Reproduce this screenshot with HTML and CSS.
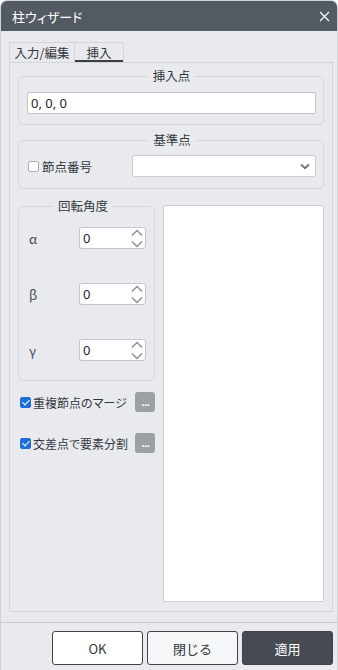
FILE: index.html
```html
<!DOCTYPE html>
<html lang="ja">
<head>
    <meta charset="UTF-8">
    <meta name="viewport" content="width=device-width, initial-scale=1.0">
    <title>柱ウィザード</title>
    <link rel="stylesheet" href="styles.css">
</head>
<body>
    <div class="window">
        <div class="titlebar">
            <span class="title">柱ウィザード</span>
            <svg class="close" width="11" height="11" viewBox="0 0 11 11">
                <path d="M1 1L10 10M10 1L1 10" stroke="#fff" stroke-width="1.2" fill="none"/>
            </svg>
        </div>

        <div class="tabs">
            <div class="tab">入力/編集</div>
            <div class="tab active">挿入</div>
        </div>

        <div class="panel">
            <fieldset class="group point">
                <legend>挿入点</legend>
                <div class="textbox">0, 0, 0</div>
            </fieldset>

            <fieldset class="group base">
                <legend>基準点</legend>
                <div class="base-row">
                    <label class="check"><span class="box"></span>節点番号</label>
                    <div class="select">
                        <svg width="10" height="7" viewBox="0 0 10 7">
                            <path d="M1 1.5L5 5.2L9 1.5" stroke="#71767d" stroke-width="2" fill="none"/>
                        </svg>
                    </div>
                </div>
            </fieldset>

            <div class="lower">
                <div class="left">
                    <fieldset class="group angles">
                        <legend>回転角度</legend>
                        <div class="angle-row">
                            <span class="sym">α</span>
                            <div class="spin">
                                <span>0</span>
                                <svg width="12" height="19" viewBox="0 0 12 19">
                                    <path d="M1 6.5L6 1.5L11 6.5M1 12.5L6 17.5L11 12.5" stroke="#8c9198" stroke-width="1.5" fill="none"/>
                                </svg>
                            </div>
                        </div>
                        <div class="angle-row">
                            <span class="sym">β</span>
                            <div class="spin">
                                <span>0</span>
                                <svg width="12" height="19" viewBox="0 0 12 19">
                                    <path d="M1 6.5L6 1.5L11 6.5M1 12.5L6 17.5L11 12.5" stroke="#8c9198" stroke-width="1.5" fill="none"/>
                                </svg>
                            </div>
                        </div>
                        <div class="angle-row">
                            <span class="sym">γ</span>
                            <div class="spin">
                                <span>0</span>
                                <svg width="12" height="19" viewBox="0 0 12 19">
                                    <path d="M1 6.5L6 1.5L11 6.5M1 12.5L6 17.5L11 12.5" stroke="#8c9198" stroke-width="1.5" fill="none"/>
                                </svg>
                            </div>
                        </div>
                    </fieldset>

                    <div class="option">
                        <label class="check"><span class="box checked"></span>重複節点のマージ</label>
                        <button class="more">...</button>
                    </div>
                    <div class="option">
                        <label class="check"><span class="box checked"></span>交差点で要素分割</label>
                        <button class="more">...</button>
                    </div>
                </div>

                <div class="list"></div>
            </div>
        </div>

        <div class="footer">
            <button class="btn">OK</button>
            <button class="btn close-btn">閉じる</button>
            <button class="btn apply">適用</button>
        </div>
    </div>
</body>
</html>
```

FILE: styles.css
```css
body {
    margin: 0;
    background: #fff;
    font-family: "Noto Sans CJK JP", "Noto Sans", sans-serif;
    font-size: 12px;
    color: #33373d;
    font-feature-settings: "palt";
}
.window {
    width: 338px;
    height: 670px;
    box-sizing: border-box;
    border: 1px solid #cfd2d6;
    border-bottom: none;
    border-radius: 7px 7px 0 0;
    background: #e9eaed;
    display: flex;
    flex-direction: column;
    overflow: hidden;
}
.titlebar {
    height: 30px;
    flex: none;
    background: #545a61;
    color: #fff;
    font-size: 13px;
    display: flex;
    align-items: center;
    justify-content: space-between;
    padding: 0 7px 0 11px;
}
.tabs {
    display: flex;
    height: 20px;
    margin: 11px 0 0 8px;
}
.tab {
    box-sizing: border-box;
    height: 20px;
    line-height: 19px;
    text-align: center;
    border: 1px solid #d3d5d9;
    border-bottom: none;
    font-size: 12.5px;
}
.tab:first-child {
    width: 66px;
}
.tab.active {
    width: 49px;
    border-left: none;
    box-shadow: inset 0 -2px 0 #3a3e45;
}
.panel {
    box-sizing: border-box;
    height: 550px;
    margin: 0 4px 0 8px;
    border: 1px solid #d3d5d9;
    padding: 0 8px 9px 8px;
    display: flex;
    flex-direction: column;
}
.group {
    margin: 0;
    border: 1px solid #d5d7db;
    border-radius: 5px;
    min-width: 0;
}
.group legend {
    margin: 0 auto;
    padding: 0 5px;
    line-height: 18px;
    font-size: 12.5px;
}
.point {
    margin-top: 4px;
    padding: 7px 7px 10px 8px;
}
.textbox {
    height: 22px;
    box-sizing: border-box;
    background: #fff;
    border: 1px solid #c2c6cb;
    border-radius: 2px;
    padding-left: 3px;
    line-height: 20px;
    font-family: "Noto Sans", sans-serif;
    font-feature-settings: normal;
    font-size: 13px;
    color: #1f2226;
}
.base {
    margin-top: 6px;
    padding: 6px 7px 11px 9px;
}
.base-row {
    display: flex;
    align-items: center;
    height: 22px;
}
.check {
    display: flex;
    align-items: center;
    gap: 3px;
    font-size: 12.5px;
}
.box {
    box-sizing: border-box;
    width: 11px;
    height: 11px;
    border: 1px solid #a9adb3;
    border-radius: 2px;
    background: #fff;
    position: relative;
}
.box.checked {
    background: #1d6fd8;
    border-color: #1d6fd8;
}
.box.checked::after {
    content: "";
    position: absolute;
    left: 3px;
    top: 0px;
    width: 3px;
    height: 6px;
    border: solid #fff;
    border-width: 0 1.6px 1.6px 0;
    transform: rotate(45deg);
}
.select {
    margin-left: auto;
    width: 184px;
    height: 22px;
    box-sizing: border-box;
    background: #fff;
    border: 1px solid #c9ccd1;
    border-radius: 3px;
    display: flex;
    align-items: center;
    justify-content: flex-end;
    padding-right: 5px;
}
.lower {
    flex: 1;
    display: flex;
    gap: 8px;
    margin-top: 8px;
}
.left {
    width: 137px;
    flex: none;
}
.angles {
    padding: 12px 8px 19px 10px;
}
.angles legend {
    margin: 0 0 0 24px;
}
.angle-row {
    display: flex;
    align-items: center;
    height: 22px;
}
.angle-row + .angle-row {
    margin-top: 34px;
}
.sym {
    flex: 1;
    font-size: 13px;
    color: #4a4660;
}
.spin {
    width: 67px;
    height: 22px;
    box-sizing: border-box;
    background: #fff;
    border: 1px solid #c2c6cb;
    border-radius: 3px;
    display: flex;
    align-items: center;
    justify-content: space-between;
    padding: 0 2px 0 3px;
    font-family: "Noto Sans", sans-serif;
    font-size: 13px;
    color: #1f2226;
}
.option {
    display: flex;
    align-items: center;
    justify-content: space-between;
    height: 20px;
    padding-left: 2px;
    margin-top: 11px;
}
.option + .option {
    margin-top: 21px;
}
.option .check {
    font-size: 12px;
    gap: 2px;
}
.more {
    width: 20px;
    height: 20px;
    border: none;
    border-radius: 3px;
    background: #9b9fa6;
    color: #fff;
    font-size: 11px;
    font-weight: bold;
    font-family: "Noto Sans", sans-serif;
    letter-spacing: -0.5px;
    padding: 0 0 0 1px;
    line-height: 20px;
}
.list {
    flex: 1;
    margin-top: 8px;
    background: #fff;
    border: 1px solid #c9ccd1;
    border-radius: 2px;
}
.footer {
    flex: none;
    margin-top: 10px;
    border-top: 1px solid #c8cbcf;
    padding: 8px 4px 0 0;
    display: flex;
    justify-content: flex-end;
    gap: 4px;
}
.btn {
    width: 91px;
    height: 34px;
    border: 1px solid #3f444b;
    border-radius: 3px;
    background: #fff;
    color: #33373d;
    font-family: inherit;
    font-size: 13px;
}
.close-btn {
    background: #f5f6f8;
}
.apply {
    background: #464b53;
    color: #fff;
}
```
